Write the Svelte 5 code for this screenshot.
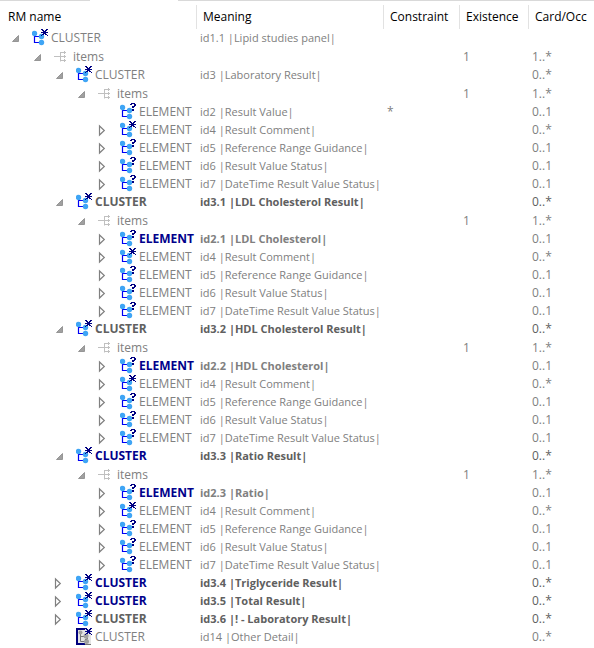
<script>
  const results = (first) => [
    { type: 'items', ex: '1', occ: '1..*', kids: [
      first,
      { type: 'ELEMENT', text: 'id4 |Result Comment|', occ: '0..*', mark: 'many', closed: true },
      { type: 'ELEMENT', text: 'id5 |Reference Range Guidance|', occ: '0..1', mark: 'opt', closed: true },
      { type: 'ELEMENT', text: 'id6 |Result Value Status|', occ: '0..1', mark: 'opt', closed: true },
      { type: 'ELEMENT', text: 'id7 |DateTime Result Value Status|', occ: '0..1', mark: 'opt', closed: true }
    ] }
  ];
  const analyte = (text) => ({ type: 'ELEMENT', text, occ: '0..1', mark: 'opt', closed: true, tone: 'added' });
  const cluster = (text, extra) => ({ type: 'CLUSTER', text, occ: '0..*', mark: 'many', ...extra });

  const tree = [
    cluster('id1.1 |Lipid studies panel|', { occ: '', kids: [
      { type: 'items', ex: '1', occ: '1..*', kids: [
        cluster('id3 |Laboratory Result|', {
          kids: results({ type: 'ELEMENT', text: 'id2 |Result Value|', con: '*', occ: '0..1', mark: 'opt' })
        }),
        cluster('id3.1 |LDL Cholesterol Result|', { tone: 'redefined', kids: results(analyte('id2.1 |LDL Cholesterol|')) }),
        cluster('id3.2 |HDL Cholesterol Result|', { tone: 'redefined', kids: results(analyte('id2.2 |HDL Cholesterol|')) }),
        cluster('id3.3 |Ratio Result|', { tone: 'added strong', kids: results(analyte('id2.3 |Ratio|')) }),
        cluster('id3.4 |Triglyceride Result|', { tone: 'added strong', closed: true }),
        cluster('id3.5 |Total Result|', { tone: 'added strong', closed: true }),
        cluster('id3.6 |! - Laboratory Result|', { tone: 'redefined', closed: true }),
        cluster('id14 |Other Detail|', { excluded: true })
      ] }
    ] })
  ];

  const flatten = (nodes, depth = 0, path = '') =>
    nodes.flatMap((node, i) => {
      const key = `${path}/${i}`;
      return [{ ...node, depth, key }, ...flatten(node.kids ?? [], depth + 1, key)];
    });
  const all = flatten(tree);

  let folded = $state([]);
  const rows = $derived(all.filter((r) => !folded.some((k) => r.key.startsWith(k + '/'))));
  const isOpen = (r) => !!r.kids && !folded.includes(r.key);

  function toggle(r) {
    if (!r.kids) return;
    folded = folded.includes(r.key) ? folded.filter((k) => k !== r.key) : [...folded, r.key];
  }
</script>

<div class="view">
  <div class="edge"><span></span><span></span></div>
  <table>
    <colgroup>
      <col class="c-name" /><col class="c-meaning" /><col class="c-con" /><col class="c-ex" /><col />
    </colgroup>
    <thead>
      <tr>
        <th scope="col">RM name</th>
        <th scope="col">Meaning</th>
        <th scope="col">Constraint</th>
        <th scope="col">Existence</th>
        <th scope="col">Card/Occ</th>
      </tr>
    </thead>
    <tbody>
      {#each rows as r (r.key)}
        <tr class={[r.type === 'items' && 'attr', r.tone]}>
          <td>
            <div class="name" style:padding-left="{8 + r.depth * 22}px">
              {#if r.kids || r.closed}
                <button type="button" aria-label="Toggle {r.text ?? r.type}" aria-expanded={isOpen(r)} onclick={() => toggle(r)}>
                  <svg width="16" height="18" viewBox="0 0 16 18" aria-hidden="true">
                    {#if isOpen(r)}
                      <path d="M4.5 12.5H10.5V6.5Z" fill="#a0a0a0" stroke="#969696" stroke-width="1" />
                    {:else}
                      <path d="M3.5 5V14L8.3 9.5Z" fill="#fff" stroke="#808080" stroke-width="1.2" />
                    {/if}
                  </svg>
                </button>
              {:else}
                <span class="blank"></span>
              {/if}
              <svg class="icon" width="17" height="18" viewBox="0 0 17 18" aria-hidden="true">
                {#if r.type === 'items'}
                  <g fill="none" stroke="#c0c0c0">
                    <path d="M0 8.5H12M6.5 4V13.5M6 4.5H12M6 12.5H12" />
                    <path d="M10.5 3V6M10.5 7V10M10.5 11V14" />
                  </g>
                {:else if r.excluded}
                  <path d="M1 1H15V16H1Z" fill="#e4e4e4" />
                  <path d="M9 1H1V16H9" fill="none" stroke="#00007d" stroke-width="2" />
                  <path d="M4.5 4V13.5H10M4.5 8.5H10" fill="none" stroke="#777" />
                  <g fill="#a0a0a0">
                    <circle cx="4.5" cy="4.5" r="2" /><circle cx="10" cy="8" r="2.5" /><circle cx="10.5" cy="13.5" r="2.5" />
                  </g>
                  <path d="M9 16.5H15M9 11.5L12 10.5" stroke="#777" />
                {:else}
                  <path d="M2.5 5V13.5H9M3 7.5H9" fill="none" stroke="#0000f5" stroke-width="1.2" />
                  <g fill="#3fa5f5">
                    <circle cx="2.5" cy="4.5" r="2.7" /><circle cx="9.5" cy="7.5" r="2.7" /><circle cx="9.5" cy="13.5" r="2.7" />
                  </g>
                {/if}
                {#if r.mark === 'many'}
                  <path
                    shape-rendering="crispEdges"
                    fill="#000082"
                    d="M9 0h2v1h-2zM14 0h2v1h-2zM10 1h2v1h-2zM13 1h2v1h-2zM11 2h3v1h-3zM9 3h7v1h-7zM11 4h3v1h-3zM10 5h2v1h-2zM13 5h2v1h-2zM9 6h1v1h-1zM15 6h1v1h-1z"
                  />
                {:else if r.mark === 'opt'}
                  <path
                    shape-rendering="crispEdges"
                    fill="#000082"
                    d="M11 0h4v1h-4zM10 1h2v1h-2zM14 1h2v2h-2zM12 3h3v1h-3zM12 4h2v1h-2zM12 6h2v2h-2z"
                  />
                {/if}
              </svg>
              <span class="type">{r.type}</span>
            </div>
          </td>
          <td class="meaning">{r.text ?? ''}</td>
          <td>{r.con ?? ''}</td>
          <td>{r.ex ?? ''}</td>
          <td class="occ">{r.occ}</td>
        </tr>
      {/each}
    </tbody>
  </table>
</div>

<style>
  :global(body) {
    margin: 0;
    background: #fff;
  }
  .view {
    font: 12px/18px 'Open Sans', 'Noto Sans', sans-serif;
    color: #808080;
    overflow: hidden;
  }
  .edge {
    display: flex;
    gap: 88px;
    height: 1px;
  }
  .edge span {
    background: #d9d9d9;
    flex: 1;
  }
  .edge span:first-child {
    flex: 0 0 90px;
  }
  table {
    width: 100%;
    table-layout: fixed;
    border-collapse: collapse;
  }
  .c-name {
    width: 197px;
  }
  .c-meaning {
    width: 187px;
  }
  .c-con {
    width: 76px;
  }
  .c-ex {
    width: 69px;
  }
  thead tr {
    height: 28px;
  }
  th {
    padding: 4px 0 0 6px;
    color: #000;
    font-weight: 400;
    text-align: left;
    white-space: nowrap;
    background: linear-gradient(#e2e2e2, #e2e2e2) right bottom / 1px 24px no-repeat;
  }
  th:first-child {
    padding-left: 8px;
  }
  th:last-child {
    background: none;
  }
  td {
    height: 18px;
    padding: 0 0 0 3px;
    white-space: nowrap;
  }
  td:first-child {
    padding: 0;
  }
  .attr td {
    height: 19px;
  }
  .meaning {
    font-size: 11px;
  }
  .name {
    display: flex;
    align-items: center;
    height: 18px;
  }
  .attr .name {
    height: 19px;
  }
  button {
    display: flex;
    width: 24px;
    height: 18px;
    padding: 0;
    border: 0;
    background: none;
    cursor: pointer;
  }
  .blank {
    width: 24px;
  }
  .icon {
    flex: none;
    margin-right: 2px;
  }
  .redefined .type,
  .redefined .meaning,
  .strong .meaning {
    font-weight: 700;
    color: #606060;
  }
  .added .type {
    font-weight: 700;
    color: #00008b;
  }
  .added .meaning {
    font-weight: 700;
  }
  .redefined .occ,
  .strong .occ {
    color: #606060;
  }
</style>
